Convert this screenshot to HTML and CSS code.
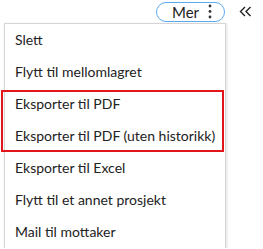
FILE: index.html
```html
<!DOCTYPE html>
<html lang="no">
<head>
    <meta charset="UTF-8">
    <title>Mer</title>
    <link rel="stylesheet" href="styles.css">
</head>
<body>
    <div class="toolbar">
        <button class="more-button">
            <span>Mer</span>
            <svg width="4" height="15" viewBox="0 0 4 15"><circle cx="2" cy="2" r="1.4"/><circle cx="2" cy="7.5" r="1.4"/><circle cx="2" cy="13" r="1.4"/></svg>
        </button>
        <button class="collapse-button">
            <svg width="13" height="11" viewBox="0 0 13 11"><path d="M6 1 L1.5 5.5 L6 10 M11.5 1 L7 5.5 L11.5 10"/></svg>
        </button>
    </div>

    <!-- meny -->
    <div class="menu">
        <div class="menu-item">Slett</div>
        <div class="menu-item">Flytt til mellomlagret</div>
        <div class="marked">
            <div class="menu-item">Eksporter til PDF</div>
            <div class="menu-item">Eksporter til PDF (uten historikk)</div>
        </div>
        <div class="menu-item">Eksporter til Excel</div>
        <div class="menu-item">Flytt til et annet prosjekt</div>
        <div class="menu-item">Mail til mottaker</div>
    </div>
</body>
</html>
```

FILE: styles.css
```css
body { margin: 0; background: white; font-family: "Lato", "Liberation Sans", sans-serif; color: #222; }
.toolbar { display: flex; justify-content: flex-end; align-items: center; padding: 1px 11px 0 0; height: 21px; }
.more-button { display: flex; align-items: center; gap: 6px; height: 20px; width: 69px; padding: 0 0 0 15px; border: 1px solid #5aaaf0; border-radius: 10px; background: white; font-family: inherit; font-size: 15px; color: #222; box-sizing: border-box; }
.more-button svg { fill: #333; margin-left: 3px; }
.collapse-button { background: none; border: none; padding: 0; margin-left: 14px; width: 13px; height: 11px; display: flex; }
.collapse-button svg path { fill: none; stroke: #222; stroke-width: 1.4; }
.menu { margin: 1px 0 0 4px; width: 222px; border: 1px solid #d6d6d6; border-bottom: none; box-shadow: 1px 1px 3px rgba(0,0,0,0.12); background: white; box-sizing: border-box; }
.menu-item { height: 32px; line-height: 32px; padding-left: 10px; font-size: 14px; white-space: nowrap; }
.marked { position: relative; }
.marked::after { content: ""; position: absolute; left: -4px; right: 1px; top: 2px; bottom: 0; border: 2px solid #e0161b; }
```
